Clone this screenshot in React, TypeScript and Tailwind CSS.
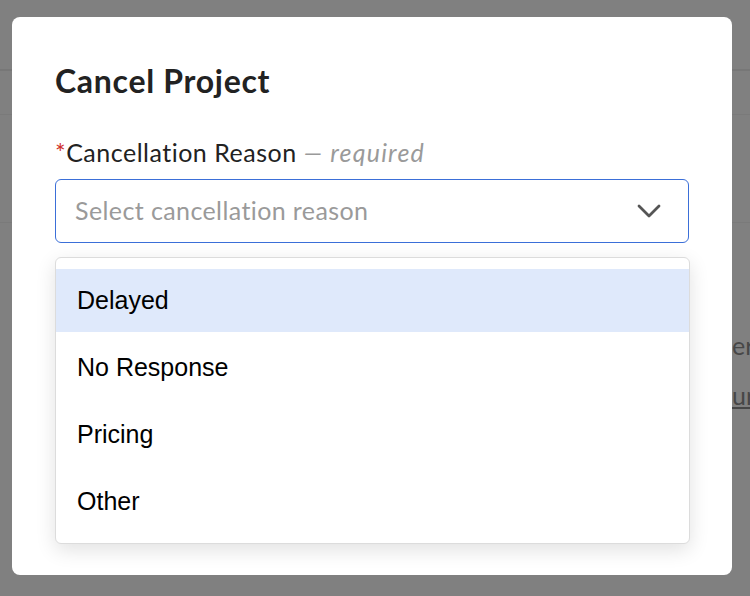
import { useState } from 'react';

const reasons = ['Delayed', 'No Response', 'Pricing', 'Other'];

function Chevron() {
  return (
    <svg width="24" height="14" viewBox="0 0 24 14" fill="none" className="text-[#555]">
      <path d="M2 2l10 10L22 2" stroke="currentColor" strokeWidth="2.8" strokeLinecap="round" strokeLinejoin="round" />
    </svg>
  );
}

export default function App() {
  const [active] = useState('Delayed');

  return (
    <div className="relative w-[750px] h-[596px] overflow-hidden bg-[#808080] font-['Lato',sans-serif]">
      {/* page behind the overlay */}
      <div className="h-[71px] border-b-2 border-[#777]" />
      <div className="h-[44px] border-b border-[#7a7a7a]" />
      <div className="h-[108px] border-b border-[#7a7a7a]" />
      <div className="pt-[107px] pl-[732px] whitespace-nowrap text-[25px] text-[#474747]">
        <div className="leading-[30px]">er</div>
        <div className="mt-[20px] underline leading-[30px]">ur</div>
      </div>

      {/* modal */}
      <div className="absolute inset-0 pt-[17px] pl-[12px]">
        <div className="w-[720px] h-[558px] rounded-lg bg-white px-[43px] pt-[44px]">
          <h2 className="text-[32px] font-bold leading-[40px] text-[#222] tracking-[0.7px]">Cancel Project</h2>

          <div className="mt-[36px] text-[25px] leading-[30px] text-[#222] tracking-[0.5px]">
            <span className="text-[#d0312d]">*</span>Cancellation Reason
            <span className="italic text-[#9a9a9a] tracking-[1.2px]"> — required</span>
          </div>

          <div className="relative mt-[12px]">
            <button className="flex w-full h-[64px] items-center justify-between rounded-md border border-[#3b6fd8] pl-[19px] pr-[27px] text-left">
              <span className="text-[25px] tracking-[0.4px] text-[#9a9a9a]">Select cancellation reason</span>
              <Chevron />
            </button>

            <ul className="absolute left-0 top-[78px] w-[635px] rounded-md border border-[#dcdcdc] bg-white pt-[11px] pb-[10px] shadow-[0_6px_20px_rgba(0,0,0,0.12)] font-['Liberation_Sans',Arial,sans-serif]">
              {reasons.map((r, i) => (
                <li
                  key={r}
                  className={`flex h-[63px] items-center pl-[21px] text-[25px] text-black ${i > 0 ? 'mt-[4px]' : ''} ${r === active ? 'bg-[#dfe9fb]' : ''}`}
                >
                  {r}
                </li>
              ))}
            </ul>
          </div>
        </div>
      </div>
    </div>
  );
}
